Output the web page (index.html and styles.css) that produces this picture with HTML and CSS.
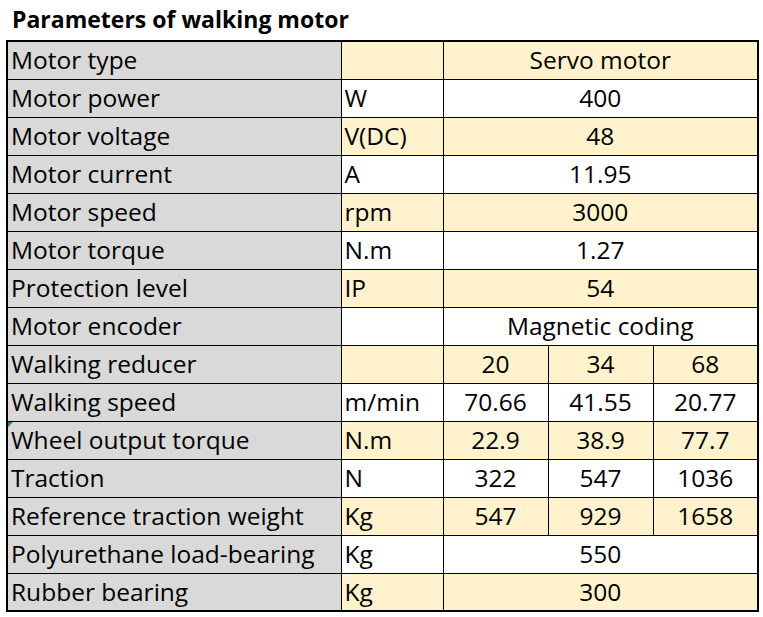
FILE: index.html
```html
<!DOCTYPE html>
<html>
<head>
<meta charset="utf-8">
<link rel="stylesheet" href="styles.css">
</head>
<body>
<h1 class="title">Parameters of walking motor</h1>
<table class="params">
  <colgroup>
    <col class="c-name"><col class="c-unit"><col class="c-val"><col class="c-val"><col class="c-val">
  </colgroup>
  <tbody>
    <tr class="y"><td class="name">Motor type</td><td class="unit"></td><td class="val" colspan="3">Servo motor</td></tr>
    <tr class="w"><td class="name">Motor power</td><td class="unit">W</td><td class="val" colspan="3">400</td></tr>
    <tr class="y"><td class="name">Motor voltage</td><td class="unit">V(DC)</td><td class="val" colspan="3">48</td></tr>
    <tr class="w"><td class="name">Motor current</td><td class="unit">A</td><td class="val" colspan="3">11.95</td></tr>
    <tr class="y"><td class="name">Motor speed</td><td class="unit">rpm</td><td class="val" colspan="3">3000</td></tr>
    <tr class="w"><td class="name">Motor torque</td><td class="unit">N.m</td><td class="val" colspan="3">1.27</td></tr>
    <tr class="y"><td class="name">Protection level</td><td class="unit">IP</td><td class="val" colspan="3">54</td></tr>
    <tr class="w"><td class="name">Motor encoder</td><td class="unit"></td><td class="val" colspan="3">Magnetic coding</td></tr>
    <tr class="y"><td class="name">Walking reducer</td><td class="unit"></td><td class="val">20</td><td class="val">34</td><td class="val">68</td></tr>
    <tr class="w"><td class="name">Walking speed</td><td class="unit">m/min</td><td class="val">70.66</td><td class="val">41.55</td><td class="val">20.77</td></tr>
    <tr class="y"><td class="name flag">Wheel output torque</td><td class="unit">N.m</td><td class="val">22.9</td><td class="val">38.9</td><td class="val">77.7</td></tr>
    <tr class="w"><td class="name">Traction</td><td class="unit">N</td><td class="val">322</td><td class="val">547</td><td class="val">1036</td></tr>
    <tr class="y"><td class="name">Reference traction weight</td><td class="unit">Kg</td><td class="val">547</td><td class="val">929</td><td class="val">1658</td></tr>
    <tr class="w"><td class="name">Polyurethane load-bearing</td><td class="unit">Kg</td><td class="val" colspan="3">550</td></tr>
    <tr class="y"><td class="name">Rubber bearing</td><td class="unit">Kg</td><td class="val" colspan="3">300</td></tr>
  </tbody>
</table>
</body>
</html>
```
FILE: styles.css
```css
html, body {
  margin: 0;
  padding: 0;
  background: #ffffff;
}
body {
  font-family: "Open Sans", "Noto Sans", sans-serif;
  color: #000;
}
.title {
  margin: 0;
  padding: 5px 0 0 12px;
  height: 40px;
  box-sizing: border-box;
  font-size: 23px;
  font-weight: 700;
  line-height: 28px;
  letter-spacing: 0;
}
.params {
  margin-left: 6px;
  border-collapse: collapse;
  table-layout: fixed;
  width: 752px;
  border: 2px solid #000;
}
.c-name { width: 334px; }
.c-unit { width: 102px; }
.c-val { width: 105px; }
.params td {
  height: 38px;
  box-sizing: border-box;
  padding: 0 2px 0 3px;
  border: 1px solid #000;
  font-size: 24.5px;
  line-height: 30px;
  vertical-align: middle;
  white-space: nowrap;
  overflow: hidden;
}
.params tr.y td { background: #fff2cc; }
.params tr.w td { background: #ffffff; }
.params tr td.name { background: #d9d9d9; }
.params td.val { text-align: center; padding: 0 2px; }
.params td.flag { position: relative; }
.params td.flag::before {
  content: "";
  position: absolute;
  left: 0;
  top: 0;
  border-top: 5px solid #1e8c3a;
  border-right: 5px solid transparent;
}
```
